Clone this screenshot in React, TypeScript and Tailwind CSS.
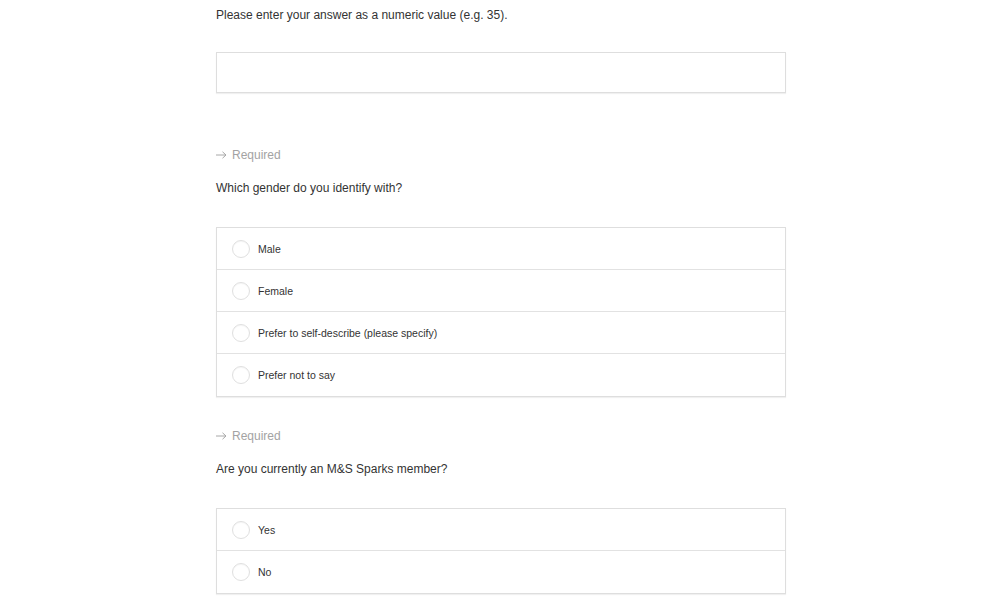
const genders = ["Male", "Female", "Prefer to self-describe (please specify)", "Prefer not to say"];
const sparks = ["Yes", "No"];

function Required({ className }: { className: string }) {
  return (
    <div className={`${className} flex items-center text-[12px] leading-[16px] text-[#a3a3a3]`}>
      <svg width="11" height="8" viewBox="0 0 11 8" fill="none" stroke="#a8a8a8" strokeWidth="1" className="mr-[5px]">
        <path d="M0 4h10M6.5 0.8L10 4L6.5 7.2" />
      </svg>
      Required
    </div>
  );
}

function Options({ items, className }: { items: string[]; className: string }) {
  return (
    <div className={`${className} border border-[#dedede] shadow-[0_1px_1px_rgba(0,0,0,0.06)] divide-y divide-[#e2e2e2]`}>
      {items.map((label) => (
        <label key={label} className="flex h-[42px] items-center pl-[15px] cursor-pointer">
          <span className="h-[18px] w-[18px] rounded-full border border-[#e0e0e0] bg-white shadow-[inset_0_1px_1px_rgba(0,0,0,0.04)]" />
          <span className="ml-[8px] text-[10.5px] leading-[14px] text-[#333]">{label}</span>
        </label>
      ))}
    </div>
  );
}

export default function App() {
  return (
    <div className="min-h-[600px] bg-white font-['Liberation_Sans',Arial,sans-serif]">
      <div className="ml-[216px] w-[570px] pt-[7px] pb-[20px]">
        <p className="text-[12px] leading-[16px] text-[#333]">
          Please enter your answer as a numeric value (e.g. 35).
        </p>
        <input
          type="text"
          className="mt-[29px] block h-[41px] w-full border border-[#dedede] bg-white px-3 text-[12px] outline-none shadow-[0_1px_1px_rgba(0,0,0,0.06)]"
        />

        <Required className="mt-[54px]" />
        <p className="mt-[17px] text-[12px] leading-[16px] text-[#333]">Which gender do you identify with?</p>
        <Options items={genders} className="mt-[31px]" />

        <Required className="mt-[31px]" />
        <p className="mt-[17px] text-[12px] leading-[16px] text-[#333]">Are you currently an M&amp;S Sparks member?</p>
        <Options items={sparks} className="mt-[31px]" />
      </div>
    </div>
  );
}
